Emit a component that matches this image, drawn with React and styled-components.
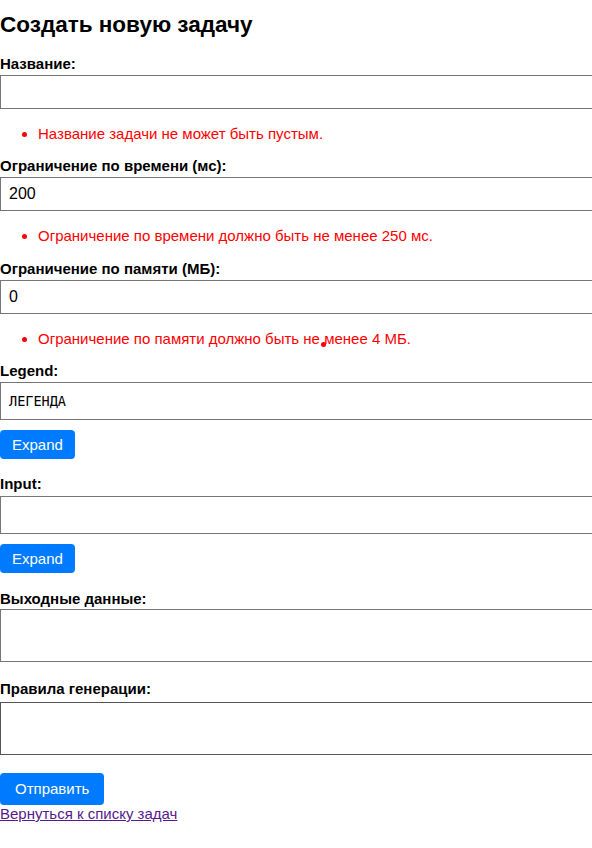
import React, { useState } from 'react'
import styled, { createGlobalStyle } from 'styled-components'

const GlobalStyle = createGlobalStyle`
    body {
        margin: 0;
        background: #fff;
        font-family: 'Liberation Sans', Arial, sans-serif;
        color: #000;
    }
`;

const Page = styled.form`
    display: flex;
    flex-direction: column;
    align-items: flex-start;
`;

const Title = styled.h1`
    font-size: 22.5px;
    font-weight: 700;
    margin: 11px 0 17px;
    line-height: 27px;
`;

const Label = styled.label`
    display: block;
    font-size: 15px;
    font-weight: 700;
    line-height: 17px;
    margin-top: ${p => p.$top || 0}px;
    margin-bottom: ${p => p.$gap || 3}px;
`;

const TextInput = styled.input`
    display: block;
    width: 100%;
    padding: 8px;
    border: 1px solid #767676;
    font-family: 'Liberation Sans', Arial, sans-serif;
    font-size: 16px;
    line-height: 16px;
    height: 16px;
    color: #000;
    outline: none;
`;

const TextArea = styled.textarea`
    display: block;
    width: 100%;
    padding: 8px;
    border: 1px solid ${p => p.$dark ? '#555' : '#767676'};
    font-family: 'DejaVu Sans Mono', 'Liberation Mono', monospace;
    font-size: 13.5px;
    line-height: 20px;
    height: ${p => p.$h || 20}px;
    resize: none;
    color: #000;
    outline: none;
`;

const Errors = styled.ul`
    margin: 16px 0 ${p => p.$bottom || 15}px;
    padding-left: 38px;
    color: #ff0000;
    font-size: 15px;
    line-height: 17px;
    align-self: stretch;
`;

const ErrorItem = styled.li`
    position: relative;
`;

const StrayDot = styled.span`
    position: absolute;
    left: 283px;
    top: 12px;
    width: 5px;
    height: 5px;
    border-radius: 50%;
    background: #ff0000;
`;

const Button = styled.button`
    background: #007bff;
    color: #fff;
    border: none;
    border-radius: 4px;
    font-family: 'Liberation Sans', Arial, sans-serif;
    font-size: 15px;
    line-height: ${p => p.$big ? 18 : 19}px;
    padding: ${p => p.$big ? '7px 15px' : '5px 12px'};
    margin-top: ${p => p.$top || 0}px;
    cursor: pointer;
`;

const BackLink = styled.a`
    color: #551a8b;
    font-size: 15px;
    line-height: 17px;
    text-decoration: underline;
`;

const App = () => {
    const [name, setName] = useState('')
    const [time, setTime] = useState('200')
    const [memory, setMemory] = useState('0')
    const [legend, setLegend] = useState('ЛЕГЕНДА')

    return (
        <Page onSubmit={e => e.preventDefault()}>
            <GlobalStyle />
            <Title>Создать новую задачу</Title>

            <Label>Название:</Label>
            <TextInput value={name} onChange={e => setName(e.target.value)} />
            <Errors>
                <ErrorItem>Название задачи не может быть пустым.</ErrorItem>
            </Errors>

            <Label>Ограничение по времени (мс):</Label>
            <TextInput value={time} onChange={e => setTime(e.target.value)} />
            <Errors $bottom={16}>
                <ErrorItem>Ограничение по времени должно быть не менее 250 мс.</ErrorItem>
            </Errors>

            <Label>Ограничение по памяти (МБ):</Label>
            <TextInput value={memory} onChange={e => setMemory(e.target.value)} />
            <Errors>
                <ErrorItem>
                    Ограничение по памяти должно быть не менее 4 МБ.
                    <StrayDot />
                </ErrorItem>
            </Errors>

            <Label $gap={3}>Legend:</Label>
            <TextArea value={legend} onChange={e => setLegend(e.target.value)} />
            <Button type="button" $top={10}>Expand</Button>

            <Label $top={16} $gap={4}>Input:</Label>
            <TextArea />
            <Button type="button" $top={10}>Expand</Button>

            <Label $top={17} $gap={2}>Выходные данные:</Label>
            <TextArea $h={35} />

            <Label $top={18} $gap={5}>Правила генерации:</Label>
            <TextArea $h={35} $dark />

            <Button type="submit" $big $top={18}>Отправить</Button>
            <BackLink href="#">Вернуться к списку задач</BackLink>
        </Page>
    )
}

export default App
